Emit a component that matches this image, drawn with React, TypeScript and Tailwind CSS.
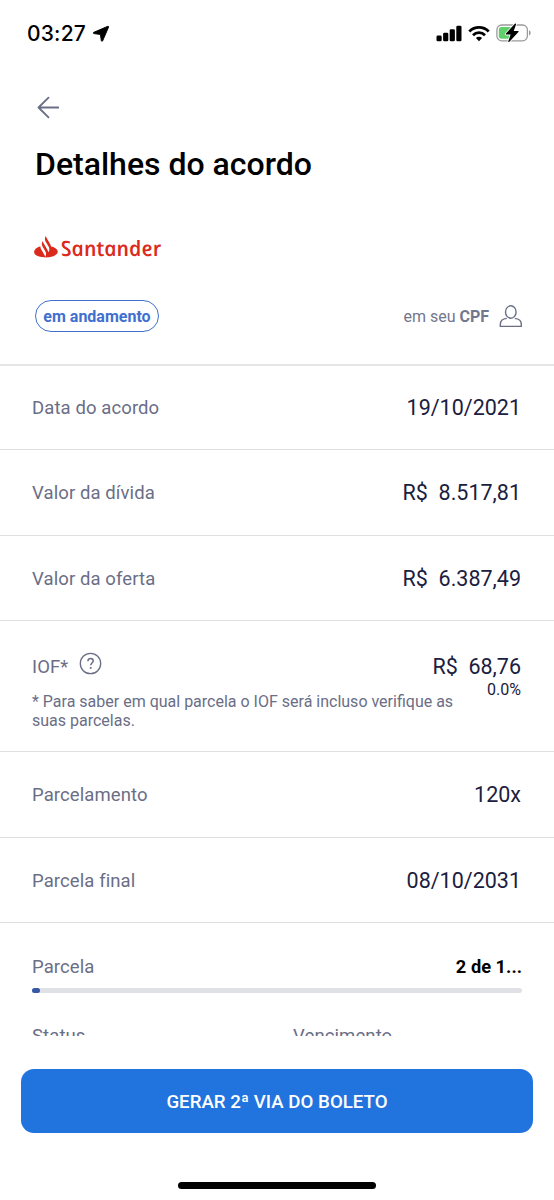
import React from 'react';
import clsx from 'clsx';

const details = [
  { label: 'Data do acordo', value: '19/10/2021', row: 'h-[84px]' },
  { label: 'Valor da dívida', value: 'R$  8.517,81', row: 'h-[86px]' },
  { label: 'Valor da oferta', value: 'R$  6.387,49', row: 'h-[85px]' },
];

const installments = [
  { label: 'Parcelamento', value: '120x', row: 'h-[86px]' },
  { label: 'Parcela final', value: '08/10/2031', row: 'h-[85px]' },
];

function StatusBar() {
  return (
    <div className="flex h-[66px] shrink-0 items-center justify-between pl-[27px] pr-[22px] font-['Inter',sans-serif]">
      <div className="flex items-center gap-[6px] pt-[1px]">
        <span className="text-[21px] font-medium leading-none tracking-[0.2px] text-black">03:27</span>
        <svg width="18" height="18" viewBox="0 0 18 18">
          <path
            d="M15.800 1.300 1.800 7.300c-.7.3-.6 1.200.1 1.300l6.500.9.900 6.100c.1.800 1.100.9 1.400.1L16.600 2.100c.2-.5-.3-1-.8-.8z"
            fill="#000"
            stroke="#000"
            strokeWidth="0.9"
            strokeLinejoin="round"
          />
        </svg>
      </div>
      <div className="flex items-center gap-[6px]">
        <svg width="26" height="17" viewBox="0 0 26 17">
          <rect x="0.5" y="10.5" width="5.2" height="5.7" rx="1.3" />
          <rect x="7.1" y="7.8" width="5.2" height="8.4" rx="1.3" />
          <rect x="13.7" y="4.3" width="5.2" height="11.9" rx="1.3" />
          <rect x="20.3" y="0.7" width="5.2" height="15.5" rx="1.3" />
        </svg>
        <svg width="22" height="17" viewBox="0 0 22 17" fill="none" stroke="#000" strokeWidth="2.8">
          <path d="M1.3 6.400a13.800 13.800 0 0 1 19.400 0" />
          <path d="M5 10.200a8.500 8.500 0 0 1 12 0" />
          <path d="M11 16.300 7.900 13.100a4.400 4.400 0 0 1 6.200 0z" fill="#000" stroke="none" />
        </svg>
        <svg width="36" height="20" viewBox="0 0 36 20">
          <rect x="0.9" y="2" width="30.5" height="15.8" rx="4.8" fill="none" stroke="#9b9b9b" strokeWidth="1.3" />
          <path d="M33 7.300c2.200.9 2.200 4.300 0 5.200z" fill="#9b9b9b" />
          <rect x="2.8" y="4" width="13" height="11.8" rx="2.8" fill="#61cf6b" />
          <path
            d="M18.900.8 9.900 10.600c-.4.5-.2 1 .4 1h4.300l-2.300 6.600c-.3.9.5 1.200 1.100.6l9-9.700c.5-.5.3-1-.4-1h-4.300L20 1.500c.3-.9-.5-1.300-1.100-.7z"
            fill="#000"
            stroke="#fff"
            strokeWidth="1.6"
            paintOrder="stroke"
          />
        </svg>
      </div>
    </div>
  );
}

function SantanderLogo() {
  return (
    <div className="-ml-px flex h-[30px] items-center gap-[3px] text-[#db291c]">
      <svg width="24" height="21.5" viewBox="0.2 2 24 21.6" fill="currentColor">
        <path d="M17.200 12.600c-.1-.9-.3-1.700-.8-2.400L12.600 3.600c-.3-.5-.5-1.100-.6-1.600l-.2.300c-.9 1.600-.9 3.600 0 5.200l3.100 5.300c.9 1.600.9 3.600 0 5.200l-.2.300c-.1-.6-.3-1.100-.6-1.600l-2.800-4.900-1.800-3.100c-.3-.5-.5-1.100-.6-1.600l-.2.300c-.9 1.600-.9 3.500 0 5.100l2.900 5c.9 1.600.9 3.600 0 5.200l-.2.300c-.1-.6-.3-1.100-.6-1.600l-3.600-6.300c-.5-.8-.7-1.800-.6-2.700C2.900 13.500.3 15.700.3 18.200.3 21.300 5.700 23.500 12.200 23.500s11.800-2.500 11.800-5.600c0-2.400-2.700-4.500-6.800-5.300z" />
      </svg>
      {/* upright italics give the single-storey letters of the wordmark */}
      <span className="inline-block -translate-x-px skew-x-[12deg] pt-[3px] font-['Open_Sans',sans-serif] text-[21px] font-semibold italic leading-none tracking-[0.1px]">
        Santander
      </span>
    </div>
  );
}

function DetailRow({ label, value, row }: { label: string; value: string; row: string }) {
  return (
    <div className={clsx('flex shrink-0 items-center justify-between border-b border-[#dedfe2] pl-8 pr-[33px]', row)}>
      <span className="pt-[3px] text-[18.5px] tracking-[0.1px] text-[#6a6e86]">{label}</span>
      <span className="whitespace-pre pt-[2px] text-[21.5px] text-[#1b2040]">{value}</span>
    </div>
  );
}

export default function App() {
  return (
    <div className="flex h-[1200px] w-[554px] flex-col overflow-hidden bg-white font-['Roboto',sans-serif]">
      <StatusBar />

      <header className="flex h-[300px] shrink-0 flex-col border-b-2 border-[#e6e6e8] pl-[35px] pr-8">
        <button className="mt-[30px] h-[24px] w-[24px]" aria-label="Voltar">
          <svg
            width="24"
            height="24"
            viewBox="0 0 24 24"
            fill="none"
            stroke="#6a6e86"
            strokeWidth="1.8"
            strokeLinecap="round"
            strokeLinejoin="round"
          >
            <path d="M23.300 11.500H3.500M13.500 1.700 3.500 11.500l10 9.800" />
          </svg>
        </button>
        <h1 className="mt-[24px] text-[32px] font-medium leading-[40px] text-black">Detalhes do acordo</h1>
        <div className="mt-[48px]">
          <SantanderLogo />
        </div>
        <div className="mt-[38px] flex h-[32px] items-center justify-between">
          <span className="flex h-[32px] w-[124px] items-center justify-center rounded-full border-[1.5px] border-[#3f70cf] pt-[1px] text-[16px] font-bold text-[#3f70cf]">
            em andamento
          </span>
          <div className="flex items-center gap-[10px] text-[16px] text-[#73778d]">
            <span className="pt-[1px]">
              em seu <b className="font-bold">CPF</b>
            </span>
            <svg width="23" height="24" viewBox="0 0 23 24" fill="none" stroke="#6a6e86" strokeWidth="1.4">
              <ellipse cx="11.8" cy="8" rx="5.3" ry="6.2" />
              <path d="M7.800 14.400C3.900 14.700 1.300 17 1.300 20.500v1.900h21v-1.900c0-3.500-2.600-5.800-6.500-6.100" strokeLinejoin="round" />
            </svg>
          </div>
        </div>
      </header>

      <main className="flex h-[670px] shrink-0 flex-col overflow-hidden">
        {details.map((item) => (
          <DetailRow key={item.label} {...item} />
        ))}

        <section className="h-[131px] shrink-0 border-b border-[#dedfe2] pl-8 pr-[33px] pt-[30px]">
          <div className="flex h-[30px] justify-between">
            <div className="flex gap-[11px] text-[#6a6e86]">
              <span className="pt-[3px] text-[18.5px] leading-[26px] tracking-[0.1px]">IOF*</span>
              <svg className="mt-[1px]" width="23" height="23" viewBox="0 0 23 23" fill="none" stroke="currentColor" strokeWidth="1.3">
                <circle cx="11.5" cy="11.5" r="10.2" />
                <path d="M8.900 9.200c0-1.700 1.100-2.800 2.700-2.800 1.500 0 2.600 1 2.600 2.500 0 2-2.500 2.200-2.500 4.400" strokeWidth="1.5" />
                <path d="M11.700 15v1.800" strokeWidth="1.7" />
              </svg>
            </div>
            <span className="whitespace-pre pt-[3px] text-[21.5px] leading-[26px] text-[#1b2040]">R$  68,76</span>
          </div>
          <div className="flex items-start justify-between">
            <p className="mt-[12px] w-[430px] text-[16px] leading-[18.5px] text-[#6a6e86]">
              * Para saber em qual parcela o IOF será incluso verifique as suas parcelas.
            </p>
            <span className="text-[16px] leading-[18px] text-[#1b2040]">0.0%</span>
          </div>
        </section>

        {installments.map((item) => (
          <DetailRow key={item.label} {...item} />
        ))}

        <section className="px-8 pt-[29px]">
          <div className="flex h-[28px] items-center justify-between">
            <span className="pt-[3px] text-[18.5px] tracking-[0.1px] text-[#6a6e86]">Parcela</span>
            <span className="pt-[2px] text-[18.3px] font-bold text-black">2 de 1...</span>
          </div>
          <div className="mt-[8px] h-[5px] rounded-full bg-[#e0e1e7]">
            <div className="h-full w-[8px] rounded-full bg-[#3559a6]" />
          </div>
          <div className="mt-[30px] grid grid-cols-[261px_1fr] text-[18.5px] leading-[26px] tracking-[0.1px] text-[#6a6e86]">
            <span>Status</span>
            <span>Vencimento</span>
          </div>
        </section>
      </main>

      <footer className="flex flex-col items-center px-[21px] pt-[33px]">
        <button className="flex h-[64px] w-full items-center justify-center rounded-[13px] bg-[#2173de] pt-[2px] text-[18.7px] font-medium text-white">
          GERAR 2ª VIA DO BOLETO
        </button>
        <div className="mt-[49px] h-[7px] w-[198px] rounded-full bg-black" />
      </footer>
    </div>
  );
}
